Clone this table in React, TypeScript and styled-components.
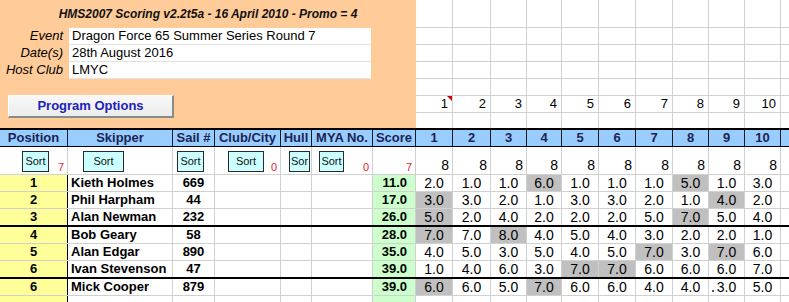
import React from 'react';
import styled, { createGlobalStyle } from 'styled-components';

const LEFT = [68, 105, 42, 66, 31, 61, 43];
const RACE = [37, 38, 36, 35, 37, 37, 37, 36, 36, 36];
const TAIL = 8;
const ALL = [...LEFT, ...RACE, TAIL];
const tpl = (ws: number[]) => ws.map((w) => `${w}px`).join(' ');

const GRID = '#d0d0d0';

const Global = createGlobalStyle`
  html, body { margin: 0; padding: 0; background: #fff; }
  body { font-family: "Liberation Sans", Arial, sans-serif; font-size: 13px; color: #000; }
  * { box-sizing: border-box; }
`;

const Sheet = styled.div`
  width: 789px;
  height: 302px;
  overflow: hidden;
  display: flex;
  flex-direction: column;
`;

const Top = styled.div`
  display: flex;
  height: 128px;
  flex-shrink: 0;
`;

const InfoPanel = styled.div`
  width: 416px;
  background: #ffcc99;
  display: flex;
  flex-direction: column;
`;

const Title = styled.div`
  height: 28px;
  display: flex;
  align-items: center;
  justify-content: center;
  font-weight: bold;
  font-style: italic;
  font-size: 12px;
  padding-bottom: 1px;
  color: #111;
`;

const InfoRow = styled.div`
  display: flex;
  height: 17px;
`;

const InfoLabel = styled.div`
  width: 69px;
  padding-right: 6px;
  text-align: right;
  font-style: italic;
  line-height: 16px;
  white-space: nowrap;
`;

const InfoValue = styled.div`
  width: 302px;
  background: #fff;
  border-bottom: 1px solid #e2e2e2;
  line-height: 16px;
  padding-left: 3px;
  white-space: nowrap;
`;

const OptionsButton = styled.div`
  margin: 16px 0 0 8px;
  width: 166px;
  height: 23px;
  background: linear-gradient(#f8f8f8, #ececec);
  border-top: 1px solid #ffffff;
  border-left: 1px solid #ffffff;
  border-right: 2px solid #8a8a8a;
  border-bottom: 2px solid #8a8a8a;
  color: #2121b8;
  font-weight: bold;
  font-size: 13px;
  display: flex;
  align-items: center;
  justify-content: center;
  padding-bottom: 1px;
`;

const RaceTop = styled.div`
  display: grid;
  grid-template-columns: ${tpl([...RACE, TAIL])};
  grid-template-rows: 28px 17px 17px 17px 17px 17px 15px;
`;

const TopCell = styled.div<{ $last?: boolean; $tail?: boolean }>`
  position: relative;
  border-right: ${(p) => (p.$tail ? 'none' : `1px solid ${GRID}`)};
  border-bottom: ${(p) => (p.$last ? 'none' : `1px solid ${GRID}`)};
  text-align: right;
  padding-right: 4px;
  line-height: 16px;
`;

const CommentMark = styled.span`
  position: absolute;
  top: 0;
  right: 0;
  width: 0;
  height: 0;
  border-top: 5px solid #d40000;
  border-left: 5px solid transparent;
`;

const HeaderRow = styled.div`
  display: grid;
  grid-template-columns: ${tpl(ALL)};
  height: 19px;
  flex-shrink: 0;
  border-top: 2px solid #000;
  border-bottom: 1px solid #000;
  background: #99ccff;
`;

const HeaderCell = styled.div<{ $tail?: boolean }>`
  border-right: ${(p) => (p.$tail ? 'none' : '1px solid #1a1a1a')};
  text-align: center;
  font-weight: bold;
  font-size: 13px;
  line-height: 16px;
  color: #1b2452;
  white-space: nowrap;
  overflow: hidden;
`;

const SortRow = styled.div`
  display: grid;
  grid-template-columns: ${tpl(ALL)};
  height: 28px;
  flex-shrink: 0;
  border-bottom: 1px solid ${GRID};
`;

const SortCell = styled.div<{ $tail?: boolean }>`
  display: flex;
  align-items: flex-end;
  border-right: ${(p) => (p.$tail ? 'none' : `1px solid ${GRID}`)};
  padding-bottom: 1px;
  white-space: nowrap;
  overflow: hidden;
`;

const SortButton = styled.div<{ $x: number; $w: number }>`
  align-self: flex-start;
  margin: 4px 0 0 ${(p) => p.$x}px;
  width: ${(p) => p.$w}px;
  height: 21px;
  flex-shrink: 0;
  background: #ccffff;
  border: 1px solid #2a2a2a;
  font-size: 11px;
  line-height: 18px;
  text-align: center;
  overflow: hidden;
  color: #111;
`;

const Count = styled.span`
  margin-left: auto;
  padding-right: 3px;
  color: #e8202a;
  font-size: 11px;
  line-height: 12px;
`;

const RaceCount = styled.span`
  margin-left: auto;
  padding-right: 3px;
  font-size: 14px;
  line-height: 15px;
`;

const DataRow = styled.div<{ $thick?: boolean; $h?: number }>`
  display: grid;
  grid-template-columns: ${tpl(ALL)};
  height: ${(p) => p.$h ?? (p.$thick ? 18 : 17)}px;
  flex-shrink: 0;
  border-bottom: ${(p) => (p.$thick ? '2px solid #000' : `1px solid ${GRID}`)};
`;

type Kind = 'pos' | 'name' | 'sail' | 'blank' | 'score' | 'race' | 'tail';

const Cell = styled.div<{ $kind: Kind; $drop?: boolean }>`
  position: relative;
  line-height: 16px;
  white-space: nowrap;
  overflow: hidden;
  font-size: ${(p) => (p.$kind === 'race' ? 14 : 13)}px;
  border-right: ${(p) =>
    p.$kind === 'pos' ? '1px solid #000' : p.$kind === 'tail' ? 'none' : `1px solid ${GRID}`};
  font-weight: ${(p) => (['pos', 'name', 'sail', 'score'].includes(p.$kind) ? 'bold' : 'normal')};
  text-align: ${(p) => (p.$kind === 'name' ? 'left' : p.$kind === 'score' ? 'right' : 'center')};
  padding-left: ${(p) => (p.$kind === 'name' ? 3 : 0)}px;
  padding-right: ${(p) => (p.$kind === 'score' ? 8 : 0)}px;
  background: ${(p) =>
    p.$kind === 'pos'
      ? '#ffff99'
      : p.$kind === 'score'
      ? '#ccffcc'
      : p.$drop
      ? '#c0c0c0'
      : '#fff'};
`;

const Speck = styled.span`
  position: absolute;
  left: 3px;
  bottom: 3px;
  width: 2px;
  height: 2px;
  background: #555;
`;

const headers = [
  'Position', 'Skipper', 'Sail #', 'Club/City', 'Hull', 'MYA No.', 'Score',
  '1', '2', '3', '4', '5', '6', '7', '8', '9', '10',
];

const sorts: { x: number; w: number; label: string; count?: string }[] = [
  { x: 22, w: 27, label: 'Sort', count: '7' },
  { x: 15, w: 41, label: 'Sort' },
  { x: 4, w: 27, label: 'Sort' },
  { x: 13, w: 36, label: 'Sort', count: '0' },
  { x: 8, w: 21, label: 'Sor' },
  { x: 7, w: 25, label: 'Sort', count: '0' },
];

type Entry = { pos: string; name: string; sail: string; score: string; races: string[]; drops: number[]; thick?: boolean };

const rows: Entry[] = [
  { pos: '1', name: 'Kieth Holmes', sail: '669', score: '11.0', races: ['2.0', '1.0', '1.0', '6.0', '1.0', '1.0', '1.0', '5.0', '1.0', '3.0'], drops: [3, 7] },
  { pos: '2', name: 'Phil Harpham', sail: '44', score: '17.0', races: ['3.0', '3.0', '2.0', '1.0', '3.0', '3.0', '2.0', '1.0', '4.0', '2.0'], drops: [0, 8] },
  { pos: '3', name: 'Alan Newman', sail: '232', score: '26.0', races: ['5.0', '2.0', '4.0', '2.0', '2.0', '2.0', '5.0', '7.0', '5.0', '4.0'], drops: [0, 7], thick: true },
  { pos: '4', name: 'Bob Geary', sail: '58', score: '28.0', races: ['7.0', '7.0', '8.0', '4.0', '5.0', '4.0', '3.0', '2.0', '2.0', '1.0'], drops: [0, 2] },
  { pos: '5', name: 'Alan Edgar', sail: '890', score: '35.0', races: ['4.0', '5.0', '3.0', '5.0', '4.0', '5.0', '7.0', '3.0', '7.0', '6.0'], drops: [6, 8] },
  { pos: '6', name: 'Ivan Stevenson', sail: '47', score: '39.0', races: ['1.0', '4.0', '6.0', '3.0', '7.0', '7.0', '6.0', '6.0', '6.0', '7.0'], drops: [4, 5], thick: true },
  { pos: '6', name: 'Mick Cooper', sail: '879', score: '39.0', races: ['6.0', '6.0', '5.0', '7.0', '6.0', '6.0', '4.0', '4.0', '3.0', '5.0'], drops: [0, 3] },
];

export default function App() {
  const topRows = [0, 1, 2, 3, 4, 5, 6];
  return (
    <>
      <Global />
      <Sheet>
        <Top>
          <InfoPanel>
            <Title>HMS2007 Scoring v2.2t5a - 16 April 2010 - Promo = 4</Title>
            <InfoRow>
              <InfoLabel>Event</InfoLabel>
              <InfoValue>Dragon Force 65 Summer Series Round 7</InfoValue>
            </InfoRow>
            <InfoRow>
              <InfoLabel>Date(s)</InfoLabel>
              <InfoValue>28th August 2016</InfoValue>
            </InfoRow>
            <InfoRow>
              <InfoLabel>Host Club</InfoLabel>
              <InfoValue>LMYC</InfoValue>
            </InfoRow>
            <OptionsButton>Program Options</OptionsButton>
          </InfoPanel>
          <RaceTop>
            {topRows.map((r) =>
              [...RACE, TAIL].map((_, c) => (
                <TopCell key={`${r}-${c}`} $last={r === 6} $tail={c === RACE.length}>
                  {r === 5 && c < RACE.length ? String(c + 1) : null}
                  {r === 5 && c === 0 ? <CommentMark /> : null}
                </TopCell>
              ))
            )}
          </RaceTop>
        </Top>

        <HeaderRow>
          {headers.map((h) => (
            <HeaderCell key={h}>{h}</HeaderCell>
          ))}
          <HeaderCell $tail />
        </HeaderRow>

        <SortRow>
          {sorts.map((s, i) => (
            <SortCell key={i}>
              <SortButton $x={s.x} $w={s.w}>{s.label}</SortButton>
              {s.count ? <Count>{s.count}</Count> : null}
            </SortCell>
          ))}
          <SortCell>
            <Count>7</Count>
          </SortCell>
          {RACE.map((_, i) => (
            <SortCell key={`r${i}`}>
              <RaceCount>8</RaceCount>
            </SortCell>
          ))}
          <SortCell $tail />
        </SortRow>

        {rows.map((r, ri) => (
          <DataRow key={ri} $thick={r.thick}>
            <Cell $kind="pos">{r.pos}</Cell>
            <Cell $kind="name">{r.name}</Cell>
            <Cell $kind="sail">{r.sail}</Cell>
            <Cell $kind="blank" />
            <Cell $kind="blank" />
            <Cell $kind="blank" />
            <Cell $kind="score">{r.score}</Cell>
            {r.races.map((v, i) => (
              <Cell key={i} $kind="race" $drop={r.drops.includes(i)}>
                {ri === 6 && i === 8 ? <Speck /> : null}
                {v}
              </Cell>
            ))}
            <Cell $kind="tail" />
          </DataRow>
        ))}
        <DataRow $h={10}>
          <Cell $kind="pos" />
          <Cell $kind="name" />
          <Cell $kind="sail" />
          <Cell $kind="blank" />
          <Cell $kind="blank" />
          <Cell $kind="blank" />
          <Cell $kind="score" />
          {RACE.map((_, i) => (
            <Cell key={i} $kind="race" />
          ))}
          <Cell $kind="tail" />
        </DataRow>
      </Sheet>
    </>
  );
}
